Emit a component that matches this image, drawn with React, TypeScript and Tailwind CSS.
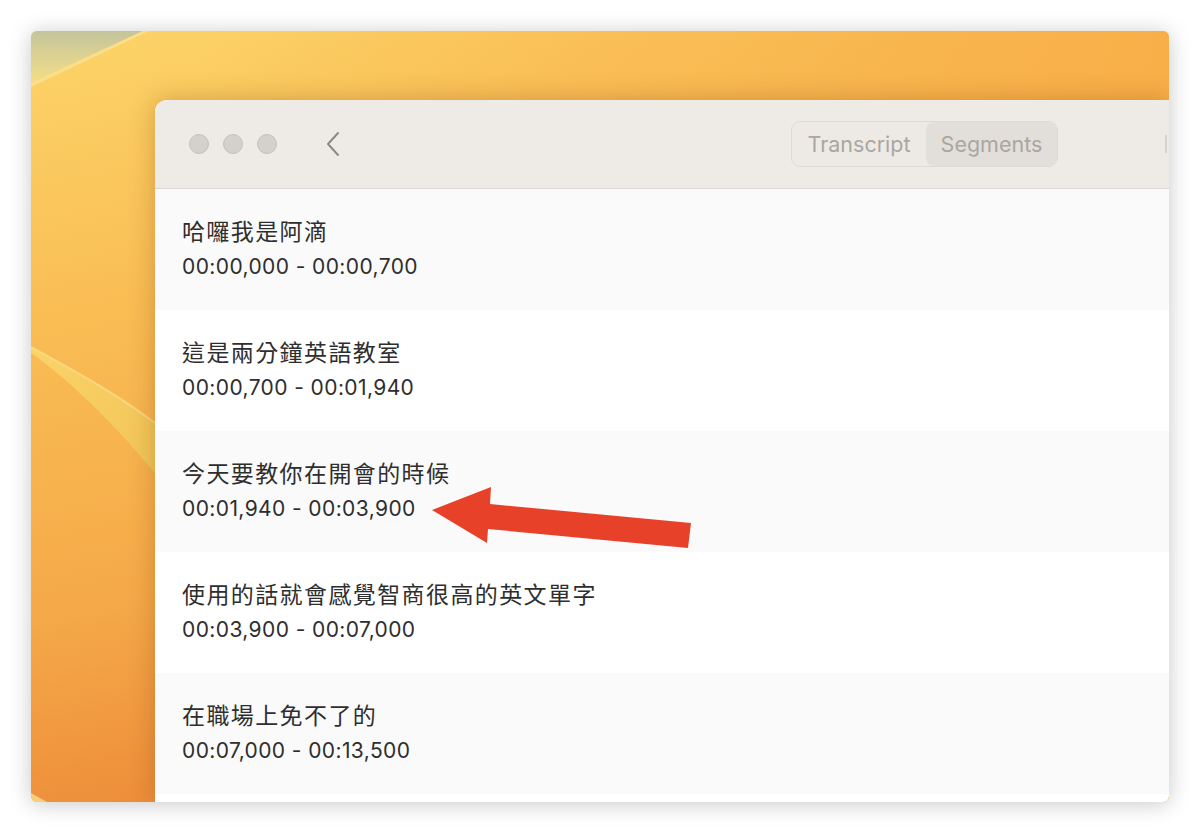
import React from 'react';

const SEGMENTS = [
  { text: '哈囉我是阿滴', start: '00:00,000', end: '00:00,700' },
  { text: '這是兩分鐘英語教室', start: '00:00,700', end: '00:01,940' },
  { text: '今天要教你在開會的時候', start: '00:01,940', end: '00:03,900' },
  { text: '使用的話就會感覺智商很高的英文單字', start: '00:03,900', end: '00:07,000' },
  { text: '在職場上免不了的', start: '00:07,000', end: '00:13,500' },
];

const Wallpaper = () => (
  <svg className="absolute inset-0 w-full h-full" viewBox="0 0 1138 771" preserveAspectRatio="none">
    <defs>
      <linearGradient id="base" x1="0" y1="0" x2="0.3" y2="1">
        <stop offset="0" stopColor="#fcd468" />
        <stop offset="0.35" stopColor="#f9bd54" />
        <stop offset="0.7" stopColor="#f5a948" />
        <stop offset="1" stopColor="#ec8838" />
      </linearGradient>
      <linearGradient id="right" x1="0" y1="0" x2="1" y2="0">
        <stop offset="0.15" stopColor="#f8b04a" stopOpacity="0" />
        <stop offset="1" stopColor="#f8ae48" stopOpacity="0.95" />
      </linearGradient>
      <linearGradient id="corner" x1="0" y1="0" x2="0" y2="1">
        <stop offset="0" stopColor="#c4c59c" />
        <stop offset="1" stopColor="#f4de86" />
      </linearGradient>
      <linearGradient id="band" x1="0" y1="0" x2="1" y2="0.6">
        <stop offset="0" stopColor="#fbd36a" />
        <stop offset="1" stopColor="#f3c75a" />
      </linearGradient>
    </defs>
    <rect width="1138" height="771" fill="url(#base)" />
    <rect width="1138" height="771" fill="url(#right)" />
    <path d="M0 0 L112 0 L0 52 Z" fill="url(#corner)" />
    <path d="M0 52 L112 0 L118 0 L0 56 Z" fill="#fbe49a" opacity="0.7" />
    <path d="M0 316 C40 338 85 362 124 392 L124 442 C85 395 40 350 0 322 Z" fill="url(#band)" />
    <path d="M0 316 C40 338 85 362 124 392" stroke="#fde08a" strokeWidth="2" fill="none" opacity="0.7" />
    <path d="M0 762 L0 771 L16 771 Z" fill="#f6cf78" />
  </svg>
);

const Arrow = () => (
  <svg className="absolute left-[277px] top-[297px] w-[270px] h-[70px] overflow-visible" viewBox="0 0 270 70">
    <polygon
      points="0,24 59,1 58,18 259,37 256,62 56,43 55,57"
      fill="#e8412a"
    />
  </svg>
);

export default function App() {
  return (
    <div className="w-[1200px] h-[834px] bg-white pl-[31px] pt-[31px] font-['Inter','Noto_Sans_CJK_TC',sans-serif]">
      <div className="relative w-[1138px] h-[771px] rounded-[6px] overflow-hidden shadow-[0_2px_22px_rgba(0,0,0,0.22)]">
        <Wallpaper />

        <div className="relative ml-[124px] mt-[69px] w-[1014px] h-[702px] bg-white rounded-tl-[12px] overflow-hidden shadow-[0_0_26px_rgba(120,55,0,0.3)] flex flex-col">
          {/* Title bar */}
          <div className="h-[89px] shrink-0 bg-[#eeebe6] border-b border-[#dcd9d4] flex items-center pl-[34px]">
            <div className="flex items-center gap-[14px]">
              <span className="w-[20px] h-[20px] rounded-full bg-[#d3d1ce] border border-[#c4c2bf]" />
              <span className="w-[20px] h-[20px] rounded-full bg-[#d3d1ce] border border-[#c4c2bf]" />
              <span className="w-[20px] h-[20px] rounded-full bg-[#d3d1ce] border border-[#c4c2bf]" />
            </div>
            <svg className="ml-[49px] w-[14px] h-[26px]" viewBox="0 0 14 26" fill="none">
              <path d="M12 2 L2 13 L12 24" stroke="#8d8a86" strokeWidth="2" strokeLinecap="round" strokeLinejoin="round" />
            </svg>
            <div className="ml-auto mr-[107px] flex h-[46px] rounded-[9px] border border-[#dedbd6] bg-[#edeae5] text-[21.5px] text-[#aaa6a1] font-['Inter',sans-serif]">
              <div className="w-[134px] flex items-center justify-center">Transcript</div>
              <div className="w-[131px] flex items-center justify-center rounded-[8px] bg-[#e2dfdb]">Segments</div>
            </div>
            <span className="w-[2px] h-[18px] bg-[#d6d3cf] mr-[2px]" />
          </div>

          {/* Segments list */}
          <div className="relative flex-1 flex flex-col">
            {SEGMENTS.map((seg, i) => (
              <div
                key={seg.start}
                className={`h-[121px] shrink-0 pl-[27px] pt-[26px] flex flex-col text-[#2e2e2e] ${i % 2 === 0 ? 'bg-[#fafafa]' : 'bg-white'}`}
              >
                <div className="text-[23px] leading-[30px] tracking-[1.4px] font-['Noto_Sans_CJK_TC',sans-serif]">{seg.text}</div>
                <div className="mt-[8px] text-[21px] leading-[28px] tracking-[0.4px] font-['Inter',sans-serif]">
                  {seg.start} - {seg.end}
                </div>
              </div>
            ))}
            <Arrow />
          </div>
        </div>
      </div>
    </div>
  );
}
